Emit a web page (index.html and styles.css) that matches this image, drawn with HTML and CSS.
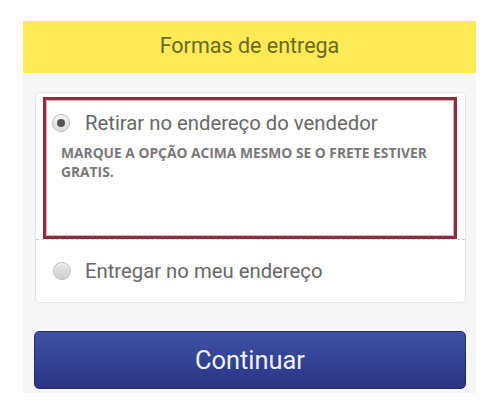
FILE: index.html
```html
<!DOCTYPE html>
<html lang="pt-BR">

<head>
    <meta charset="UTF-8">
    <meta name="viewport" content="width=device-width, initial-scale=1.0">
    <title>Formas de entrega</title>
    <link rel="stylesheet" href="styles.css">
</head>

<body>
    <div class="screen">
        <div class="header">Formas de entrega</div>

        <div class="panel">
            <div class="card">
                <div class="highlight-wrap">
                    <div class="highlight">
                        <label class="option">
                            <span class="radio checked"></span>
                            <span class="option-text">Retirar no endereço do vendedor</span>
                        </label>
                        <p class="note">MARQUE A OPÇÃO ACIMA MESMO SE O FRETE ESTIVER GRATIS.</p>
                    </div>
                </div>

                <div class="divider"></div>

                <label class="option option-second">
                    <span class="radio"></span>
                    <span class="option-text">Entregar no meu endereço</span>
                </label>
            </div>

            <button class="continue">Continuar</button>
        </div>
    </div>
</body>

</html>
```

FILE: styles.css
```css
body {
    margin: 0;
    background: #ffffff;
    font-family: Roboto, "Noto Sans", Arial, sans-serif;
}

.screen {
    width: 453px;
    margin: 21px 0 0 23px;
}

.header {
    height: 52px;
    line-height: 49px;
    background: #fdeb56;
    color: #6c6827;
    font-size: 21.5px;
    text-align: center;
}

.panel {
    background: #f6f6f7;
    padding: 19px 9px 4px 12px;
}

.card {
    background: #ffffff;
    border: 1px solid #e6e6e8;
    border-radius: 5px;
    width: 429px;
}

.highlight-wrap {
    padding: 4px 8px 0 7px;
}

.highlight {
    height: 136px;
    border: 3px solid #8d2c3c;
    box-shadow: inset 0 0 0 1px #e3b5bb;
}

.option {
    display: flex;
    align-items: center;
    height: 30px;
    padding: 8px 0 0 6px;
}

.option-text {
    margin-left: 15px;
    font-size: 20.3px;
    color: #676767;
}

.radio {
    width: 16px;
    height: 16px;
    border-radius: 50%;
    border: 1px solid #b9b9b9;
    background: linear-gradient(#e8e8e8, #cfcfcf);
    box-shadow: inset 0 1px 1px rgba(255, 255, 255, 0.8);
    flex-shrink: 0;
    position: relative;
}

.radio.checked {
    background: linear-gradient(#f4f4f4, #dcdcdc);
}

.radio.checked::after {
    content: "";
    position: absolute;
    left: 4px;
    top: 4px;
    width: 8px;
    height: 8px;
    border-radius: 50%;
    background: #555555;
}

.note {
    margin: 5px 20px 0 15px;
    font-family: "Open Sans", "Noto Sans", sans-serif;
    font-weight: bold;
    font-size: 13.8px;
    line-height: 19px;
    color: #787878;
}

.divider {
    border-top: 1px dashed #d2d2d2;
}

.option-second {
    height: 62px;
    padding: 0 0 0 17px;
}

.option-second .option-text {
    margin-left: 14px;
}

.continue {
    display: block;
    width: 432px;
    height: 58px;
    margin: 28px 0 0 -1px;
    border: 1px solid #252c70;
    border-radius: 5px;
    background: linear-gradient(#3d52a4, #2b3384);
    color: #f2f2f8;
    font-family: Roboto, "Noto Sans", Arial, sans-serif;
    font-size: 25.4px;
    cursor: pointer;
}
```
